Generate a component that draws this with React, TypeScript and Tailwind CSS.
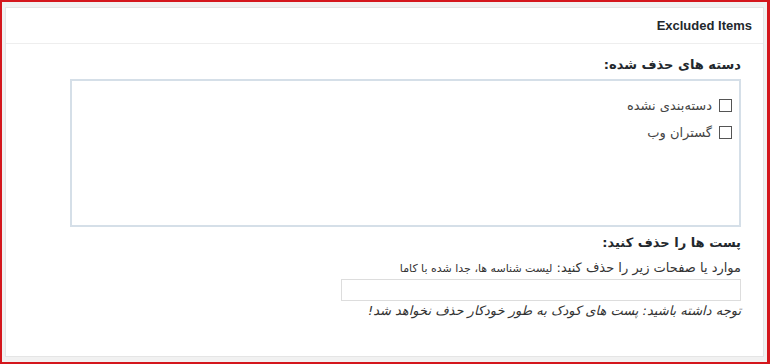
export default function App() {
  return (
    <div className="w-[770px] h-[364px] border-l-2 border-t-2 border-r-[3px] border-b-2 border-[#d4161c] bg-[#f1f1f1] px-[3px] pt-[5px] pb-[5px]">
      <div className="h-full bg-white border border-[#e5e5e5] flex flex-col">
        {/* header */}
        <div className="h-[36px] border-b border-[#eeeeee] flex items-center justify-end pr-[11px]">
          <h2 className="text-[13px] font-bold text-[#23282d] [font-family:'Liberation_Sans',Arial,sans-serif]">
            Excluded Items
          </h2>
        </div>

        <div dir="rtl" className="flex flex-col pr-[22px] pl-[64px] pt-[12px] text-[#333] [font-family:'DejaVu_Sans',Tahoma,sans-serif]">
          <h3 className="text-[13px] font-bold leading-[18px] text-[#23282d]">دسته های حذف شده:</h3>

          <div className="mt-[5px] h-[148px] border-2 border-[#d5dfe8] pt-[16px] pr-[7px] flex flex-col gap-[10px]">
            {['دسته‌بندی نشده', 'گستران وب'].map(label => (
              <label key={label} className="flex items-center gap-[7px] text-[13px] leading-[17px] text-[#444]">
                <span className="w-[13px] h-[13px] border border-[#555] bg-white shrink-0" />
                <span>{label}</span>
              </label>
            ))}
          </div>

          <h3 className="mt-[7px] text-[13px] font-bold leading-[18px] text-[#23282d]">پست ها را حذف کنید:</h3>

          <p className="mt-[8px] text-[13px] leading-[16px] text-[#333]">
            موارد یا صفحات زیر را حذف کنید: <span className="text-[11px]">لیست شناسه ها، جدا شده با کاما</span>
          </p>

          <div className="mt-[2px] w-[400px] h-[22px] border border-[#dddddd] bg-white" />

          <p className="mt-[1px] text-[13px] italic leading-[17px] text-[#333]">
            توجه داشته باشید: پست های کودک به طور خودکار حذف نخواهد شد!
          </p>
        </div>
      </div>
    </div>
  );
}
